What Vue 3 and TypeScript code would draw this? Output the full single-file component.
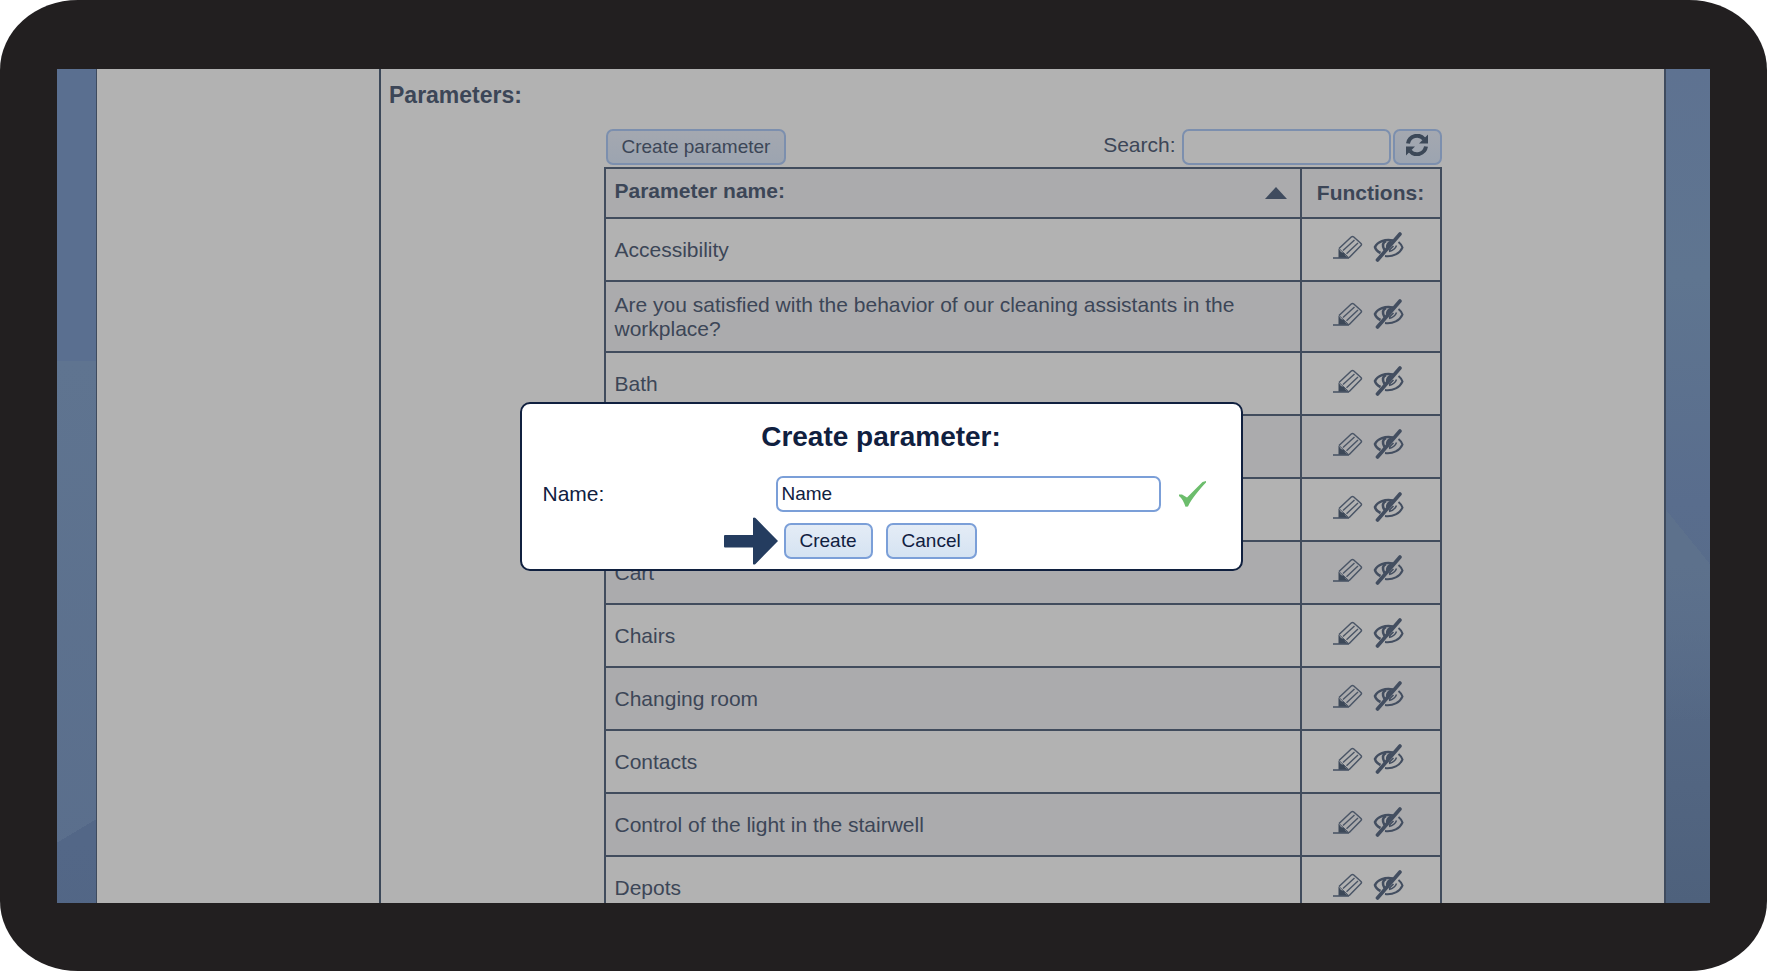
<script setup lang="ts">
import { ref } from 'vue'

const parameters: string[] = [
  'Accessibility',
  'Are you satisfied with the behavior of our cleaning assistants in the workplace?',
  'Bath',
  'Bathroom',
  'Car',
  'Cart',
  'Chairs',
  'Changing room',
  'Contacts',
  'Control of the light in the stairwell',
  'Depots',
]

const search = ref('')
const name = ref('Name')
</script>

<template>
  <div class="device">
    <div class="screen">
      <div class="rail rail-left"></div>
      <main class="sheet">
        <aside class="sidebar"></aside>
        <section class="content">
          <h1 class="heading">Parameters:</h1>
          <div class="listing">
            <div class="toolbar">
              <button type="button" class="btn dim">Create parameter</button>
              <div class="search">
                <label for="search">Search:</label>
                <input id="search" v-model="search" type="text" class="field dim" />
                <button type="button" class="btn dim refresh" aria-label="Refresh">
                  <svg width="22" height="22" viewBox="0 0 22 22" fill="none">
                    <path d="M2 9.5A9.200 9.200 0 0 1 18 5" stroke="#3c4858" stroke-width="4" />
                    <path d="M22 .5v9h-9z" fill="#3c4858" />
                    <path d="M20 12.500A9.200 9.200 0 0 1 4 17" stroke="#3c4858" stroke-width="4" />
                    <path d="M0 21.500v-9h9z" fill="#3c4858" />
                  </svg>
                </button>
              </div>
            </div>
            <table class="grid">
              <thead>
                <tr>
                  <th scope="col">
                    <div class="sortable">
                      <span class="col-name">Parameter name:</span>
                      <svg width="22" height="12" viewBox="0 0 22 12"><path d="M11 0l11 12H0z" fill="#3f4b5e" /></svg>
                    </div>
                  </th>
                  <th scope="col" class="functions">Functions:</th>
                </tr>
              </thead>
              <tbody>
                <tr v-for="item in parameters" :key="item">
                  <td>{{ item }}</td>
                  <td class="functions">
                    <div class="tools">
                      <button type="button" class="tool" aria-label="Edit">
                        <svg width="30" height="24" viewBox="0 0 30 24" fill="none" stroke="#4a5566">
                          <path d="M6 13.500L18.500 1.800Q19.500 1 20.500 1.800L28 8.500Q29 9.500 28 10.500L16 22.800" stroke-width="1.500" />
                          <path d="M10 15.500L21.500 5M13.500 18.800L25 8" stroke-width="1.400" />
                          <path d="M6 13.500L16 22.800" stroke-width="1" />
                          <path d="M5.500 13.500L8 17L11 18L12.500 20.500L15.500 23H5.500z" fill="#3c4858" stroke="none" />
                          <path d="M0 23h16" stroke-width="1.600" />
                        </svg>
                      </button>
                      <button type="button" class="tool" aria-label="Hide">
                        <svg width="31" height="30" viewBox="0 0 31 30" fill="none" stroke="#434e60">
                          <path d="M20 8.500C12 7 4.500 9.500 2 15C2.500 17.500 4.500 19.500 7.500 21" stroke-width="2.600" />
                          <path d="M25.500 10C28 12 29 13.500 29.500 15.500C27 21.500 20 25 12 24" stroke-width="2" />
                          <path d="M13 9C9.500 10.500 9 14 11.500 18" stroke-width="2.600" />
                          <path d="M18 8.500C14.500 9.500 12.500 12 13 16L18 11z" fill="#434e60" stroke="none" />
                          <path d="M23.500 13.500C22.500 16.500 20 18.500 16 19.500M20.500 14L16 18.500" stroke-width="1.500" />
                          <path d="M27 2L4.500 28" stroke-width="3.600" stroke-linecap="round" />
                        </svg>
                      </button>
                    </div>
                  </td>
                </tr>
              </tbody>
            </table>
          </div>
        </section>
      </main>
      <div class="rail rail-right"></div>

      <div class="overlay">
        <form class="dialog" role="dialog" aria-labelledby="dialog-title" @submit.prevent>
          <h2 id="dialog-title" class="title">Create parameter:</h2>
          <div class="row">
            <label for="name" class="label">Name:</label>
            <input id="name" v-model="name" type="text" class="field name" />
            <svg class="check" width="27" height="26" viewBox="0 0 27 26"><path d="M0 13.500L3 13.500L8 16.500L23.500 1L27 0V1.500C20 9 13 17 9 25.500L6.500 25.800C5 21 3 17.500 0 15z" fill="#6cbd6c" /></svg>
          </div>
          <div class="actions">
            <svg class="arrow" width="54" height="48" viewBox="0 0 54 48"><path d="M1 18H29V1Q30 0 31.500 1L54 24L31.500 47Q30 48 29 47V30.500H1Q0 30.500 0 29.500V19Q0 18 1 18z" fill="#243c5f" /></svg>
            <button type="submit" class="btn">Create</button>
            <button type="button" class="btn cancel">Cancel</button>
          </div>
        </form>
      </div>
    </div>
  </div>
</template>

<style>
body {
  margin: 0;
  background: #fff;
}
</style>

<style scoped>
* {
  box-sizing: border-box;
}
.device {
  height: 100vh;
  padding: 69px 57px 68px;
  background: #221f20;
  border-radius: 78px / 70px;
  font-family: 'Liberation Sans', Arial, sans-serif;
  font-size: 21px;
  line-height: 24px;
  color: #3c4657;
}
.screen {
  position: relative;
  display: flex;
  height: 100%;
  overflow: hidden;
}
.rail-left {
  width: 39px;
  background:
    linear-gradient(149deg, transparent 50%, #536787 50%) 0 750px / 39px 24px no-repeat,
    linear-gradient(#536787, #526685) 0 774px / 39px 100px no-repeat,
    linear-gradient(#5a6f90 0 292px, #5f7490 292px, #5a6e8c 100%);
}
.rail-right {
  width: 44px;
  background:
    linear-gradient(231deg, transparent 50%, #5d718c 50%) 0 441px / 44px 54px no-repeat,
    linear-gradient(#5d718c, #52658200) 0 495px / 44px 160px no-repeat,
    linear-gradient(#5e7291, #5f7590 25%, #596d8d 52%, #586c8a 62%, #526581 86%, #4e617c);
}
.sheet {
  flex: 1;
  display: flex;
  background: #b2b2b2;
  border: solid #3f4b5e;
  border-width: 0 2px 0 1px;
}
.sidebar {
  flex: 0 0 284px;
  border-right: 2px solid #3c4859;
}
.content {
  flex: 1;
  padding: 14px 8px 0;
}
.heading {
  margin: 0 0 22px;
  font-size: 23px;
  line-height: 24px;
}
.listing {
  width: 838px;
  max-width: 100%;
  margin: 0 auto;
}
.toolbar {
  display: flex;
  justify-content: space-between;
  padding: 0 0 2px 2px;
}
.search {
  display: flex;
  gap: 2px;
}
.search label {
  padding: 4px 4px 0 0;
}
.search .field {
  width: 209px;
}
.btn,
.field {
  height: 36px;
  margin: 0;
  border: 2px solid #7b9fd8;
  border-radius: 7px;
  font: 19px/24px 'Liberation Sans', Arial, sans-serif;
  color: #10203f;
}
.btn {
  padding: 0 14px;
  background: linear-gradient(#e4ecf6, #d5e3f2);
}
.field {
  padding: 0 4px;
  background: #fff;
  outline: 0;
}
.btn.dim {
  color: #3c4657;
  border-color: #7c8fae;
  background: linear-gradient(#a4a8b0, #9ca4b0);
}
.field.dim {
  color: #3c4657;
  border-color: #7c8fae;
  background: #b2b2b2;
}
.refresh {
  width: 49px;
  padding: 0 0 4px;
}
.refresh svg {
  display: block;
  margin: 0 auto;
}
.grid {
  width: 100%;
  border-collapse: collapse;
  table-layout: fixed;
}
.grid th,
.grid td {
  height: 63px;
  padding: 0 9px;
  border: 2px solid #414c5d;
  text-align: left;
}
.grid th {
  height: 50px;
}
.grid tr:nth-child(2) td {
  padding: 11px 9px 10px;
}
.grid thead tr,
.grid tbody tr:nth-child(even) {
  background: #ababad;
}
.grid .functions {
  width: 140px;
  text-align: center;
}
.sortable {
  display: flex;
  align-items: center;
  justify-content: space-between;
  padding-right: 4px;
}
.col-name {
  padding-bottom: 4px;
}
.tools {
  display: flex;
  align-items: center;
  justify-content: center;
  gap: 10px;
  padding: 0 4px 6px 0;
}
.tool {
  padding: 0;
  border: 0;
  background: none;
}
.tool svg {
  display: block;
}
.overlay {
  position: absolute;
  inset: 0;
  display: flex;
  align-items: center;
  justify-content: center;
  padding-right: 5px;
}
.dialog {
  width: 723px;
  max-width: 100%;
  padding: 17px 21px 10px;
  background: #fff;
  border: 2px solid #10203f;
  border-radius: 10px;
  color: #10203f;
}
.title {
  margin: 0 0 23px;
  font-size: 28px;
  line-height: 32px;
  text-align: center;
}
.row {
  display: flex;
  align-items: center;
}
.label {
  flex: 0 0 233px;
}
.name {
  width: 385px;
}
.check {
  margin-left: 18px;
}
.actions {
  display: flex;
  align-items: center;
  margin-top: 11px;
  padding-left: 181px;
}
.arrow {
  margin: -6px 6px -6px 0;
}
.cancel {
  margin-left: 13px;
}
</style>
